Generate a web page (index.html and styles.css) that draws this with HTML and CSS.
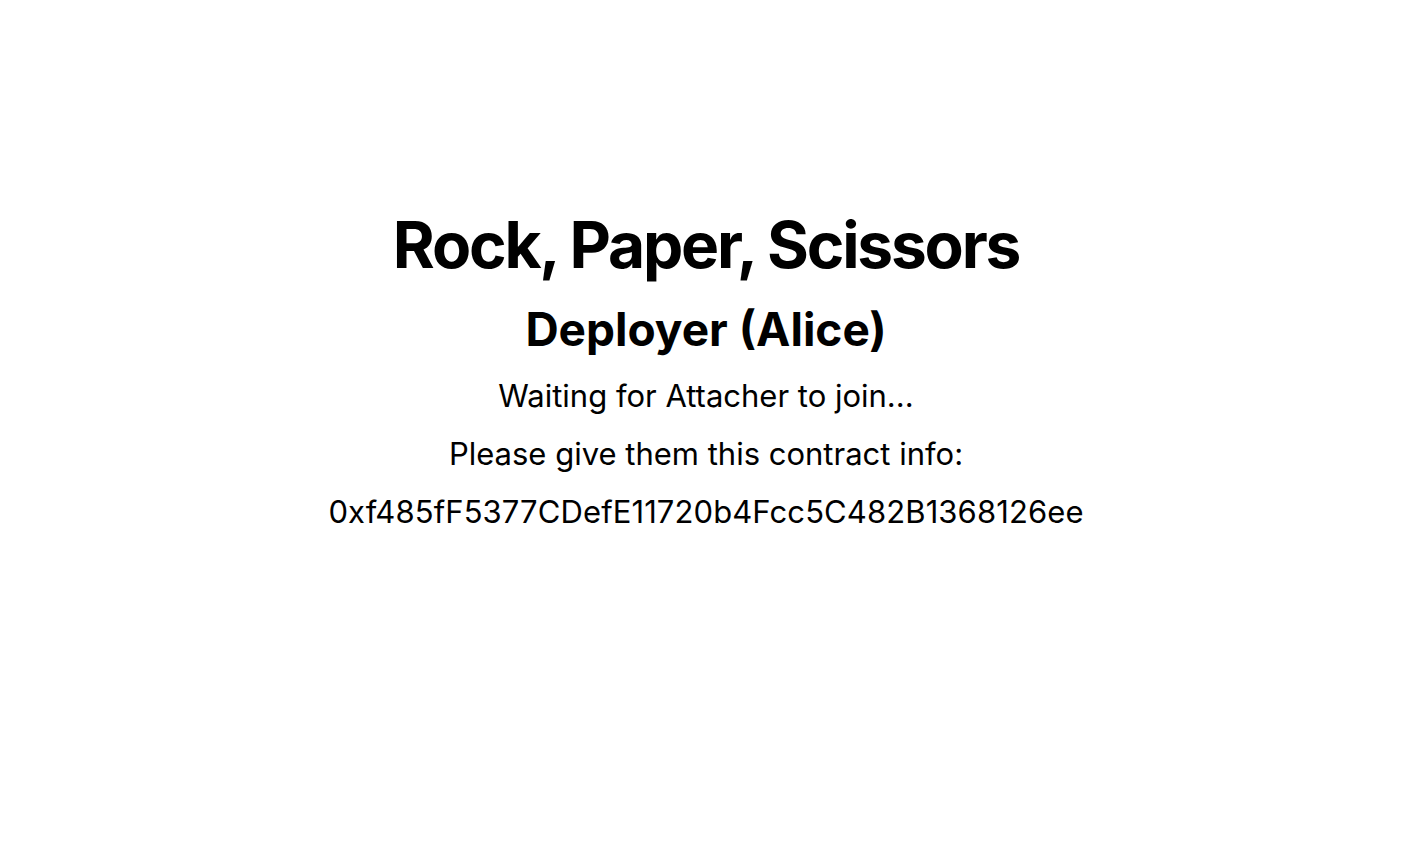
FILE: index.html
```html
<!DOCTYPE html>
<html>
<head>
<meta charset="utf-8">
<link rel="stylesheet" href="styles.css">
</head>
<body>
<main class="app">
  <h1 class="title">Rock, Paper, Scissors</h1>
  <h2 class="role">Deployer (Alice)</h2>
  <p class="line">Waiting for Attacher to join...</p>
  <p class="line">Please give them this contract info:</p>
  <p class="line hex">0xf485fF5377CDefE11720b4Fcc5C482B1368126ee</p>
</main>
</body>
</html>
```
FILE: styles.css
```css
html, body {
  margin: 0;
  padding: 0;
  background: #fff;
}
body {
  font-family: Inter, "Noto Sans", sans-serif;
  color: #000;
}
.app {
  display: flex;
  flex-direction: column;
  align-items: center;
  padding-top: 200px;
  padding-right: 8px;
  text-align: center;
}
.title {
  margin: 0;
  font-size: 64px;
  font-weight: 700;
  line-height: 90px;
  letter-spacing: -2.2px;
}
.role {
  margin: 2px 0 0;
  font-size: 46px;
  font-weight: 700;
  line-height: 75px;
}
.line {
  margin: 0;
  font-size: 31px;
  line-height: 58px;
}
.hex {
  letter-spacing: 0.1px;
}
```
